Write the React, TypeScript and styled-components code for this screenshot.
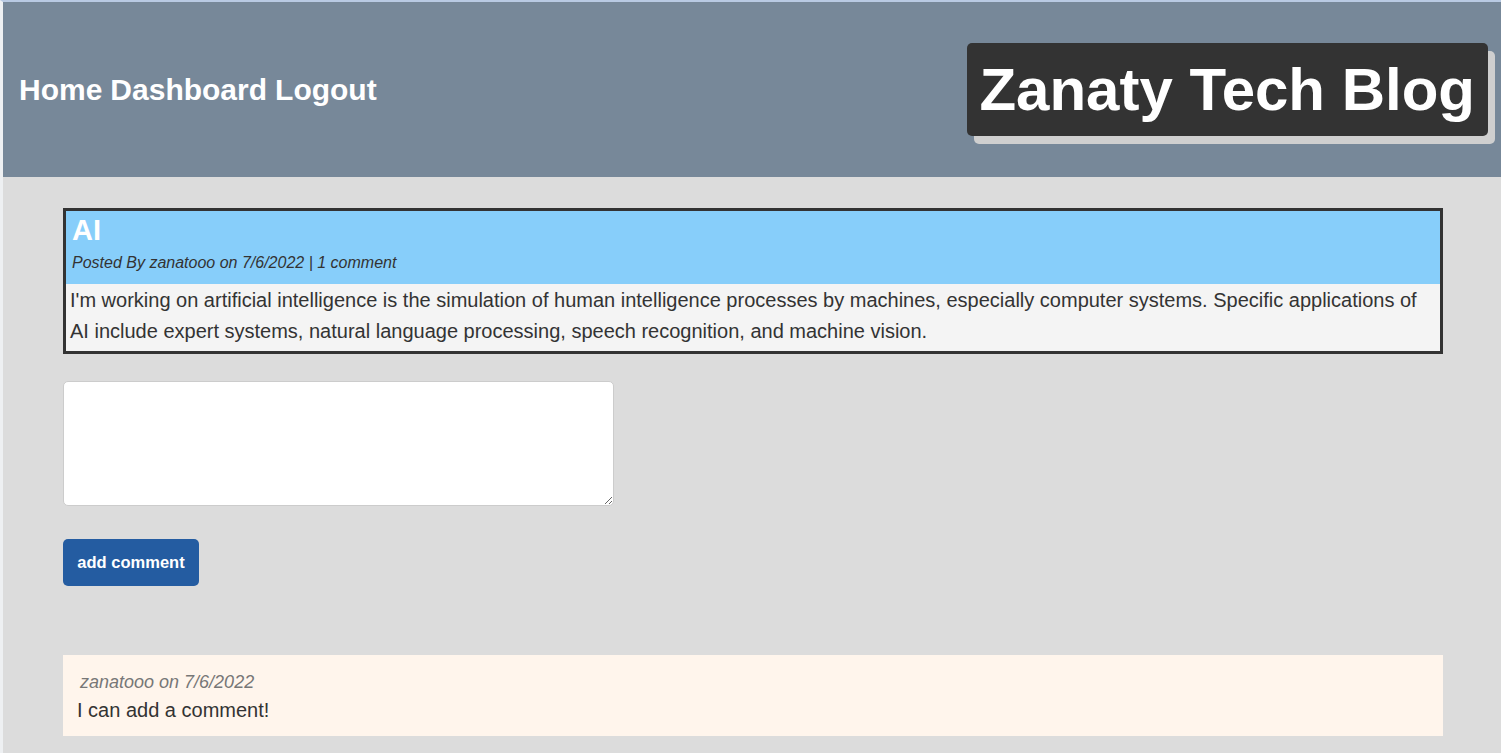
import styled, { createGlobalStyle } from 'styled-components'

const GlobalStyle = createGlobalStyle`
  html, body {
    margin: 0;
    padding: 0;
  }
  body {
    background: #dcdcdc;
    font-family: 'Liberation Sans', Arial, Helvetica, sans-serif;
    color: #333;
    min-height: 100vh;
    box-sizing: border-box;
    border-top: 2px solid #b9cae3;
    border-left: 3px solid #eef0f2;
  }
  * {
    box-sizing: border-box;
  }
`

const Header = styled.header`
  height: 175px;
  background: #778899;
  display: flex;
  align-items: center;
  justify-content: space-between;
  padding: 0 13px 0 16px;
`

const Nav = styled.nav`
  display: flex;
  gap: 8px;
`

const NavLink = styled.a`
  color: #fff;
  font-size: 30px;
  font-weight: 700;
  text-decoration: none;
  cursor: pointer;
`

const Brand = styled.h1`
  margin: 0 0 1px;
  background: #333;
  color: #fff;
  font-size: 60px;
  font-weight: 700;
  line-height: 69px;
  padding: 12px 13px 12px 12px;
  border-radius: 5px;
  box-shadow: 7px 8px 0 #cfcfcf;
`

const Main = styled.main`
  padding: 31px 58px 40px 60px;
`

const PostCard = styled.article`
  border: 3px solid #333;
`

const PostHeader = styled.div`
  background: #87cefa;
  padding: 3px 6px 12px;
`

const PostTitle = styled.h2`
  margin: 0 0 8px;
  color: #fff;
  font-size: 29px;
  font-weight: 700;
  line-height: 32px;
`

const Meta = styled.p<{ $size: number; $color: string }>`
  margin: 0;
  font-style: italic;
  font-size: ${(p) => p.$size}px;
  line-height: 1.15;
  color: ${(p) => p.$color};
`

const PostBody = styled.p`
  margin: 0;
  background: #f4f4f4;
  padding: 1px 4px 4px;
  font-size: 20px;
  line-height: 31px;
`

const CommentForm = styled.form`
  margin-top: 27px;
  display: flex;
  flex-direction: column;
  align-items: flex-start;
  gap: 33px;
`

const TextArea = styled.textarea`
  width: 551px;
  height: 125px;
  background: #fff;
  border: 1px solid #cccccc;
  border-radius: 5px;
  font-family: inherit;
  font-size: 16px;
  padding: 8px;
  outline: none;
`

const Button = styled.button`
  width: 136px;
  height: 47px;
  background: #245ca1;
  color: #fff;
  border: none;
  border-radius: 5px;
  font-family: inherit;
  font-size: 16.5px;
  font-weight: 700;
  cursor: pointer;
`

const CommentCard = styled.div`
  margin-top: 69px;
  background: #fff5ec;
  padding: 17px 14px 14px;
  display: flex;
  flex-direction: column;
  gap: 6px;
`

const CommentMeta = styled(Meta)`
  padding-left: 3px;
`

const CommentText = styled.p`
  margin: 0;
  font-size: 20px;
  line-height: 23px;
  color: #333;
`

export default function App() {
  return (
    <>
      <GlobalStyle />
      <Header>
        <Nav>
          <NavLink>Home</NavLink>
          <NavLink>Dashboard</NavLink>
          <NavLink>Logout</NavLink>
        </Nav>
        <Brand>Zanaty Tech Blog</Brand>
      </Header>
      <Main>
        <PostCard>
          <PostHeader>
            <PostTitle>AI</PostTitle>
            <Meta $size={16} $color="#333">
              Posted By zanatooo on 7/6/2022 | 1 comment
            </Meta>
          </PostHeader>
          <PostBody>
            I'm working on artificial intelligence is the simulation of human intelligence
            processes by machines, especially computer systems. Specific applications of AI
            include expert systems, natural language processing, speech recognition, and
            machine vision.
          </PostBody>
        </PostCard>
        <CommentForm onSubmit={(e) => e.preventDefault()}>
          <TextArea name="comment-body" />
          <Button type="submit">add comment</Button>
        </CommentForm>
        <CommentCard>
          <CommentMeta $size={18} $color="#777">
            zanatooo on 7/6/2022
          </CommentMeta>
          <CommentText>I can add a comment!</CommentText>
        </CommentCard>
      </Main>
    </>
  )
}
